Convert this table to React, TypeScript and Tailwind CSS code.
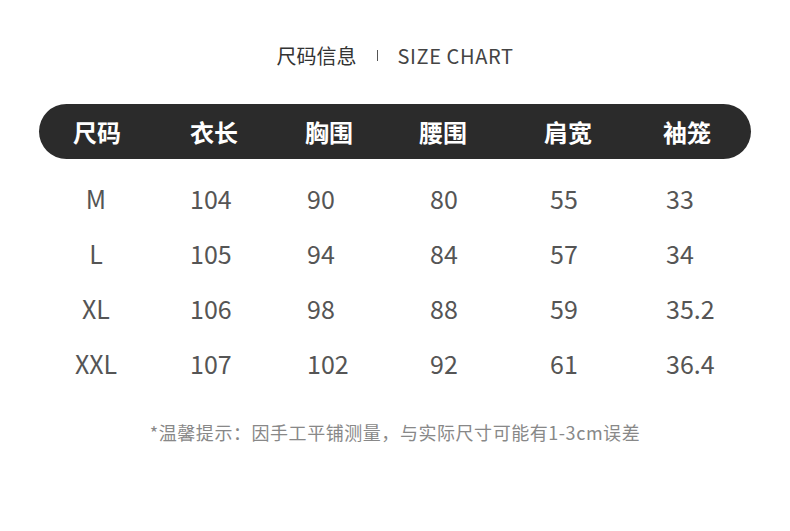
const font = { fontFamily: '"Noto Sans CJK SC", "Noto Sans", sans-serif' }

const headers = ['尺码', '衣长', '胸围', '腰围', '肩宽', '袖笼']
const headerWidths = ['w-[117px]', 'w-[115px]', 'w-[114px]', 'w-[125px]', 'w-[119px]', 'w-[80px]']

const rows = [
  ['M', '104', '90', '80', '55', '33'],
  ['L', '105', '94', '84', '57', '34'],
  ['XL', '106', '98', '88', '59', '35.2'],
  ['XXL', '107', '102', '92', '61', '36.4'],
]
const cellWidths = ['w-[117px]', 'w-[123px]', 'w-[120px]', 'w-[116px]', 'w-[80px]']

export default function App() {
  return (
    <div className="w-[790px] h-[531px] bg-white" style={font}>
      <div className="flex items-center justify-center pt-[41px] h-[70px]">
        <span className="text-[20px] leading-[28px] text-[#333]">尺码信息</span>
        <span className="mx-[20px] w-px h-[11px] bg-[#555]"></span>
        <span className="text-[20px] leading-[28px] text-[#444] tracking-[0.6px]">SIZE CHART</span>
      </div>

      <div className="mx-[39px] mt-[34px] h-[55px] rounded-full bg-[#2b2b2b] flex items-center pl-[34px]">
        {headers.map((h, i) => (
          <div key={h} className={`${headerWidths[i]} text-white text-[24px] font-bold leading-none`}>
            {h}
          </div>
        ))}
      </div>

      <div className="mt-[12px]">
        {rows.map((r) => (
          <div key={r[0]} className="flex items-center h-[55px] pl-[39px] text-[25px] text-[#555]">
            <div className="w-[114px] text-center">{r[0]}</div>
            <div className="w-[37px]"></div>
            {r.slice(1).map((v, i) => (
              <div key={i} className={cellWidths[i]}>{v}</div>
            ))}
          </div>
        ))}
      </div>

      <div className="mt-[29px] text-center text-[18px] leading-[24px] text-[#888] tracking-[0.55px]">
        *温馨提示：因手工平铺测量，与实际尺寸可能有1-3cm误差
      </div>
    </div>
  )
}
